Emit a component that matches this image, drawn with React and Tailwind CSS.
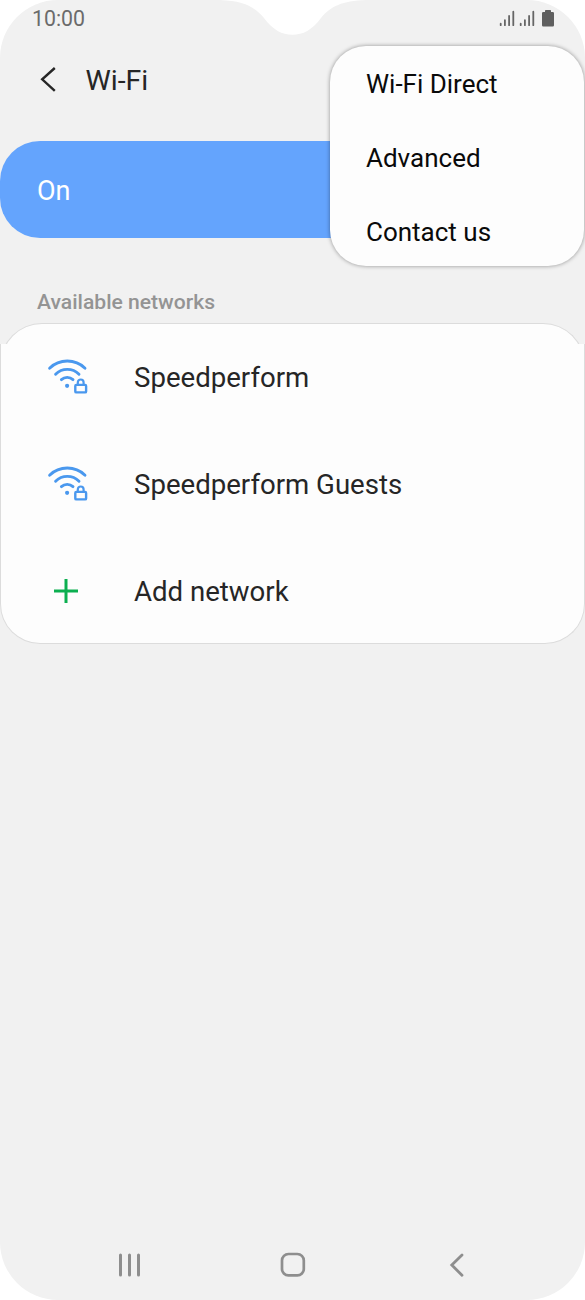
import React from 'react';

const networks = ['Speedperform', 'Speedperform Guests'];
const menuItems = ['Wi-Fi Direct', 'Advanced', 'Contact us'];

function SignalIcon() {
  return (
    <svg width="16" height="17" viewBox="0 0 16 17" stroke="#666" strokeWidth="1.8" strokeLinecap="round">
      <path d="M1.700 13.700v1.500M5.900 10.200v5M10.100 5.900v9.300M14.300 1.700v13.500" />
    </svg>
  );
}

function BatteryIcon() {
  return (
    <svg width="12" height="17" viewBox="0 0 12 17" fill="#5f5f5f">
      <path d="M3 2V.8Q3 0 3.8 0h4.4Q9 0 9 .8V2h1.800Q12 2 12 3.200v12Q12 16.500 10.800 16.500H1.200Q0 16.500 0 15.200v-12Q0 2 1.200 2Z" />
    </svg>
  );
}

function SecureWifiIcon() {
  return (
    <svg width="44" height="36" viewBox="0 0 44 36" fill="none" stroke="#4a98ee" strokeWidth="2.9" strokeLinecap="round">
      <path d="M3.600 10.200A25.500 25.500 0 0 1 39 10.200" />
      <path d="M9.600 16.200A16.500 16.500 0 0 1 33 16.200" />
      <path d="M15.400 21.600A8.700 8.700 0 0 1 27 21.600" />
      <circle cx="21.100" cy="27.800" r="2.100" fill="#4a98ee" stroke="none" />
      <rect x="29.300" y="26.900" width="10.800" height="7.500" rx="1" strokeWidth="2.400" />
      <path d="M31.800 26.300v-1.900a2.900 2.900 0 0 1 5.800 0v1.900" strokeWidth="2.200" />
    </svg>
  );
}

function NetworkRow({ icon, label }) {
  return (
    <div className="flex h-[106.700px] items-center">
      <div className="flex w-[133px] shrink-0 pl-[45px]">{icon}</div>
      <span className="pt-1 text-[27.600px] leading-8 text-[#262626]">{label}</span>
    </div>
  );
}

export default function App() {
  return (
    <div className="relative flex h-[1300px] w-[585px] flex-col overflow-hidden rounded-[58px] bg-[#f1f1f1] font-[Roboto,sans-serif]">
      {/* Camera notch */}
      <svg className="absolute top-0 left-[220px]" width="146" height="36" viewBox="0 0 146 36" fill="#fff">
        <path d="M0 0C23 1 34 6 44 18C53 30 62 34.800 72.500 34.800S92 30 101 18C111 6 122 1 146 0Z" />
      </svg>

      {/* Status bar */}
      <div className="flex h-[38px] items-center justify-between pr-[31.500px] pl-8">
        <span className="text-[21.300px] leading-6 text-[#6b6b6b]">10:00</span>
        <div className="flex items-center gap-[4.500px] pb-0.5">
          <SignalIcon />
          <SignalIcon />
          <div className="ml-0.5"><BatteryIcon /></div>
        </div>
      </div>

      {/* Title */}
      <div className="flex h-[102.500px] shrink-0 items-start pt-[26px] pl-10">
        <svg className="mt-[3px]" width="16" height="25" viewBox="0 0 16 25" fill="none" stroke="#262626" strokeWidth="2.400">
          <path d="M14.800 1L2.200 12.300L14.800 23.800" />
        </svg>
        <h1 className="ml-[29.500px] pt-px text-[28.500px] leading-8 text-[#262626]">Wi-Fi</h1>
      </div>

      {/* Wi-Fi switch */}
      <div className="mr-1 flex h-[97.500px] shrink-0 items-center rounded-[40px] bg-[#64a4fd] pl-[37px]">
        <span className="pt-[3px] text-[27px] leading-8 text-white">On</span>
      </div>

      <h2 className="mt-[52px] pl-[37px] text-[21.100px] leading-6 font-medium text-[#949494]">Available networks</h2>

      {/* Network list */}
      <div className="mt-[9px] h-[42px] shrink-0 rounded-t-[42px] border border-b-0 border-[#dcdcdc] bg-[#fdfdfd]" />
      <div className="-mt-[21px] h-[300px] shrink-0 rounded-b-[40px] border border-t-0 border-[#dcdcdc] bg-[#fdfdfd]">
        <div className="-mt-[21px]">
          {networks.map((name) => (
            <NetworkRow key={name} icon={<SecureWifiIcon />} label={name} />
          ))}
          <NetworkRow
            label="Add network"
            icon={
              <svg className="ml-[7px] mt-0.5" width="26" height="26" viewBox="0 0 26 26" stroke="#0caf50" strokeWidth="3">
                <path d="M13 1v24M1 13h24" />
              </svg>
            }
          />
        </div>
      </div>

      {/* Navigation bar */}
      <div className="mt-auto flex h-[71px] items-center pl-[118px]">
        <svg width="24" height="26" viewBox="0 0 24 26" stroke="#8e8e8e" strokeWidth="3" strokeLinecap="round">
          <path d="M2.500 3v20M11.500 3v20M20.500 3v20" />
        </svg>
        <svg className="ml-[138px]" width="26" height="26" viewBox="0 0 26 26" fill="none" stroke="#8e8e8e" strokeWidth="2.700">
          <rect x="2" y="2" width="21.800" height="21.400" rx="6.500" />
        </svg>
        <svg className="ml-[143px]" width="16" height="26" viewBox="0 0 16 26" fill="none" stroke="#8e8e8e" strokeWidth="2.800" strokeLinecap="round">
          <path d="M13 3L2.800 13L13 23.300" />
        </svg>
      </div>

      {/* Overflow menu */}
      <div className="absolute top-[46px] left-[330px] flex h-[220px] w-[254px] flex-col rounded-[36px] bg-[#fdfdfd] pl-9 shadow-[0_0_4px_rgba(0,0,0,0.4)]">
        {menuItems.map((item) => (
          <div key={item} className="flex h-[74px] shrink-0 items-center pt-px text-[26px] leading-8 text-[#0a0a0a]">{item}</div>
        ))}
      </div>
    </div>
  );
}
